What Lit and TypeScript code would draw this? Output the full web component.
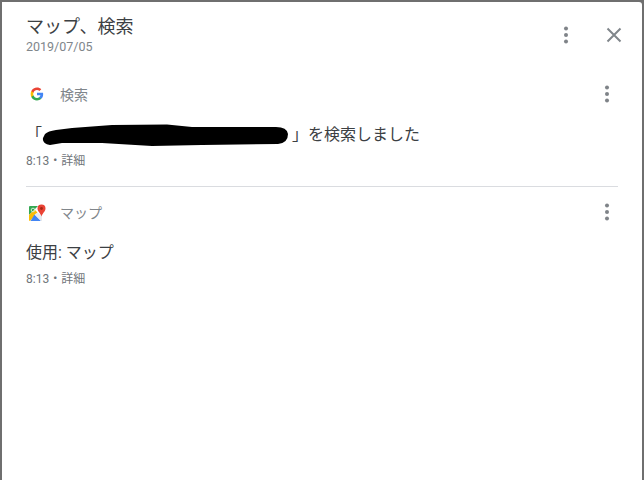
import { LitElement, html, css, svg } from "lit";
import { customElement } from "lit/decorators.js";

const dots = html`<svg class="dots" width="6" height="18" viewBox="0 0 6 18">
  <circle cx="3" cy="2.5" r="2" /><circle cx="3" cy="9" r="2" /><circle cx="3" cy="15.5" r="2" />
</svg>`;

const googleG = svg`<svg width="14" height="14" viewBox="0 0 48 48">
  <path fill="#4285F4" d="M45.1 24.5c0-1.6-.1-3.100-.4-4.500H24v8.500h11.800c-.5 2.700-2.100 5-4.400 6.600v5.500h7.100c4.200-3.800 6.600-9.500 6.600-16.100z"/>
  <path fill="#34A853" d="M24 46c5.900 0 10.900-2 14.500-5.300l-7.100-5.500c-2 1.300-4.500 2.100-7.400 2.100-5.700 0-10.500-3.800-12.200-9H4.500v5.700C8.100 41.100 15.500 46 24 46z"/>
  <path fill="#FBBC05" d="M11.800 28.300c-.4-1.300-.7-2.700-.7-4.300s.3-3 .7-4.300V14H4.500C3 17 2.200 20.400 2.200 24s.8 7 2.300 10l7.300-5.700z"/>
  <path fill="#EA4335" d="M24 10.700c3.200 0 6.100 1.100 8.400 3.300l6.300-6.300C34.900 4.100 29.900 2 24 2 15.500 2 8.100 6.900 4.500 14l7.300 5.700c1.700-5.200 6.500-9 12.200-9z"/>
</svg>`;

const mapsIcon = svg`<svg width="18" height="18" viewBox="0 -1 18 18">
  <path fill="#34A853" d="M1 3 Q1 2 2 2 H10 L1 11 Z"/>
  <path fill="#FBBC05" d="M1 11 L6.500 5.500 L9.500 8.500 L2 17 Q1 17 1 16 Z"/>
  <path fill="#4285F4" d="M6.500 10.500 L13 17 H2.500 Z"/>
  <path fill="#E8EAED" d="M6.500 10.500 L9.500 8.500 L14 12 L14 17 L13 17 Z"/>
  <circle cx="5" cy="6" r="1.800" fill="none" stroke="#CDEBD4" stroke-width="1"/>
  <path fill="#EA4335" d="M13.500 0.500 a4 4 0 0 1 4 4 c0 3 -3 4.500 -4 8 c-1 -3.500 -4 -5 -4 -8 a4 4 0 0 1 4 -4 z"/>
  <circle cx="13.500" cy="4.500" r="1.400" fill="#A52714"/>
</svg>`;

const blob = svg`<svg class="blob" width="246" height="22" viewBox="0 0 246 22">
  <path fill="#000" d="M3 10 Q6 7 14 6 L30 4 L70 1 L125 0.500 L150 3 L234 3 Q245 3 246 10 Q246 19 236 20 L160 21 L110 22 L60 19 L20 19 L8 21 Q0 20 1 14 Z"/>
</svg>`;

@customElement("app-root")
export class AppRoot extends LitElement {
  static styles = css`
    :host {
      display: block;
      box-sizing: border-box;
      width: 644px;
      height: 480px;
      background: #6f6f6f;
      padding: 2px 2px 0 2px;
      font-family: Roboto, "Noto Sans CJK JP", sans-serif;
    }
    .panel {
      box-sizing: border-box;
      height: 100%;
      background: #fff;
      border-top-right-radius: 3px;
      padding: 0 0 0 24px;
      overflow: hidden;
    }
    .head {
      display: flex;
      align-items: flex-start;
      height: 80px;
    }
    .titles {
      flex: 1;
      padding-top: 12px;
    }
    .title {
      font-size: 18px;
      line-height: 26px;
      color: #3c4043;
    }
    .date {
      font-size: 12.500px;
      line-height: 14px;
      color: #80868b;
    }
    .head-actions {
      display: flex;
      align-items: center;
      gap: 37px;
      padding: 24px 20px 0 0;
    }
    .dots {
      display: block;
      fill: #7f8388;
    }
    .close {
      display: block;
      stroke: #80868b;
      stroke-width: 2;
    }
    .item-head {
      display: flex;
      align-items: center;
      height: 24px;
      padding-right: 32px;
    }
    .icon {
      width: 22px;
      display: flex;
      justify-content: center;
      margin-right: 12px;
    }
    .source {
      flex: 1;
      font-size: 14px;
      color: #80868b;
    }
    .line {
      display: flex;
      align-items: center;
      font-size: 16px;
      line-height: 22px;
      color: #3c4043;
      margin-top: 18px;
      height: 22px;
    }
    .blob {
      display: block;
      margin-right: 4px;
    }
    .meta {
      font-size: 12px;
      line-height: 14px;
      color: #70757a;
      margin-top: 8px;
    }
    .sep {
      height: 1px;
      background: #dadce0;
      margin: 18px 24px 13px 0;
    }
  `;

  render() {
    return html`
      <div class="panel">
        <div class="head">
          <div class="titles">
            <div class="title">マップ、検索</div>
            <div class="date">2019/07/05</div>
          </div>
          <div class="head-actions">
            ${dots}
            <svg class="close" width="16" height="16" viewBox="0 0 16 16">
              <path d="M1.500 1.500 L14.500 14.500 M14.500 1.500 L1.500 14.500" />
            </svg>
          </div>
        </div>

        <div class="item-head">
          <span class="icon">${googleG}</span>
          <span class="source">検索</span>
          ${dots}
        </div>
        <div class="line">「${blob}」を検索しました</div>
        <div class="meta">8:13・詳細</div>

        <div class="sep"></div>

        <div class="item-head">
          <span class="icon">${mapsIcon}</span>
          <span class="source">マップ</span>
          ${dots}
        </div>
        <div class="line">使用: マップ</div>
        <div class="meta">8:13・詳細</div>
      </div>
    `;
  }
}
